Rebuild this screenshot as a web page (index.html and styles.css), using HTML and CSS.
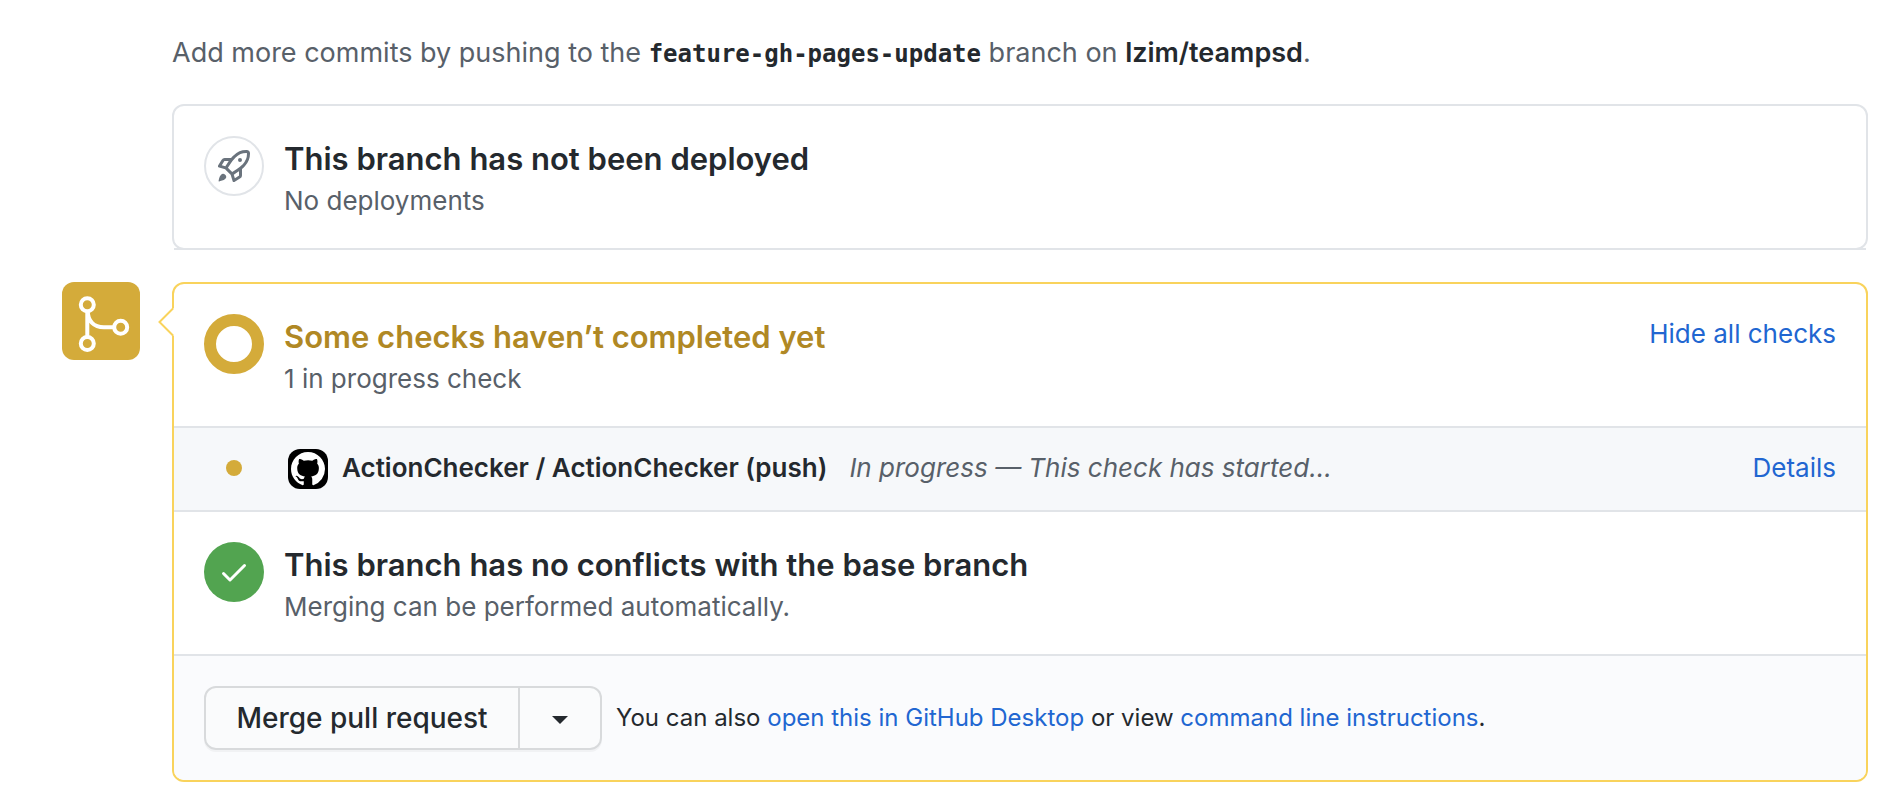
FILE: index.html
```html
<!DOCTYPE html>
<html lang="en">
<head>
<meta charset="utf-8">
<title>Merge pull request</title>
<link rel="stylesheet" href="styles.css">
</head>
<body>
<main class="page">
  <p class="push-hint">Add more commits by pushing to the <strong class="branch-name">feature-gh-pages-update</strong> branch on <strong class="repo-name">lzim/teampsd</strong>.</p>

  <section class="box deploy-box">
    <div class="item deploy-item">
      <span class="status status-deploy">
        <svg class="glyph" viewBox="0 0 16 16" aria-hidden="true"><path fill-rule="evenodd" d="M14.064 0a8.75 8.75 0 00-6.187 2.563l-.459.458c-.314.314-.616.641-.904.979H3.31a1.75 1.75 0 00-1.49.833L.11 7.607a.75.75 0 00.418 1.11l3.102.954c.037.051.079.1.124.145l2.429 2.428c.046.046.094.088.145.125l.954 3.102a.75.75 0 001.11.418l2.774-1.707a1.75 1.75 0 00.833-1.49V9.485c.338-.288.665-.59.979-.904l.458-.459A8.75 8.75 0 0016 1.936V1.75A1.75 1.75 0 0014.25 0h-.186zM10.5 10.625c-.088.06-.177.118-.266.175l-2.35 1.521.548 1.783 1.949-1.2a.25.25 0 00.119-.213v-2.066zM3.678 8.116L5.2 5.766c.058-.09.117-.178.176-.266H3.309a.25.25 0 00-.213.119l-1.2 1.95 1.782.547zm5.26-4.493A7.25 7.25 0 0114.063 1.5h.186a.25.25 0 01.25.25v.186a7.25 7.25 0 01-2.123 5.127l-.459.458a15.21 15.21 0 01-2.499 2.02l-2.317 1.5-2.143-2.143 1.5-2.317a15.25 15.25 0 012.02-2.5l.458-.458h.002zM12 5a1 1 0 11-2 0 1 1 0 012 0zm-8.44 9.56a1.5 1.5 0 10-2.12-2.12c-.734.73-1.047 2.332-1.15 3.003a.23.23 0 00.265.265c.671-.103 2.273-.416 3.005-1.148z"/></svg>
      </span>
      <div class="item-text">
        <h2 class="item-title">This branch has not been deployed</h2>
        <p class="item-note">No deployments</p>
      </div>
    </div>
  </section>

  <div class="merge-row">
    <span class="merge-badge">
      <svg class="merge-glyph" viewBox="0 0 56 62" aria-hidden="true"><g fill="none" stroke="#fff" stroke-width="4"><circle cx="13.3" cy="13.7" r="6.5"/><circle cx="13.3" cy="52.5" r="6.5"/><circle cx="46.7" cy="36.3" r="6.5"/><path d="M13.3 20v26M13.8 20c0 10 6 16.300 16 16.300h10.500"/></g></svg>
    </span>
    <section class="box merge-box">
      <svg class="pointer" viewBox="0 0 16 30" aria-hidden="true"><path class="pointer-fill" d="M16 1L2 15l14 14z"/><path class="pointer-line" d="M15 1.500L1.500 15 15 28.500"/></svg>
      <div class="item">
        <span class="status status-pending"></span>
        <div class="item-text">
          <h2 class="item-title pending">Some checks haven’t completed yet</h2>
          <p class="item-note">1 in progress check</p>
        </div>
        <a class="link" href="#checks">Hide all checks</a>
      </div>
      <div class="check" id="checks">
        <span class="dot"></span>
        <span class="avatar">
          <svg class="avatar-glyph" viewBox="0 0 16 16" aria-hidden="true"><path d="M8 0C3.580 0 0 3.580 0 8c0 3.540 2.290 6.530 5.470 7.590.4.070.55-.17.55-.38 0-.19-.01-.82-.01-1.490-2.010.37-2.530-.49-2.690-.94-.09-.23-.48-.94-.82-1.130-.28-.15-.68-.52-.01-.53.63-.01 1.080.58 1.230.82.72 1.210 1.870.87 2.330.66.07-.52.28-.87.51-1.070-1.780-.2-3.640-.89-3.640-3.950 0-.87.31-1.590.82-2.150-.08-.2-.36-1.020.08-2.120 0 0 .67-.21 2.200.82.64-.18 1.320-.27 2-.27s1.360.09 2 .27c1.530-1.040 2.200-.82 2.200-.82.44 1.100.16 1.920.08 2.120.51.56.82 1.270.82 2.150 0 3.070-1.870 3.750-3.650 3.950.29.25.54.73.54 1.480 0 1.070-.01 1.930-.01 2.200 0 .21.15.46.55.38A8.013 8.013 0 0016 8c0-4.420-3.580-8-8-8z"/></svg>
        </span>
        <strong class="check-name">ActionChecker / ActionChecker (push)</strong>
        <em class="check-state">In progress — This check has started...</em>
        <a class="link check-link" href="#details">Details</a>
      </div>
      <div class="item">
        <span class="status status-ok">
          <svg class="glyph" viewBox="0 0 16 16" aria-hidden="true"><path d="M13.780 4.220a.75.75 0 010 1.060l-7.250 7.250a.75.75 0 01-1.060 0L2.220 9.280a.75.75 0 011.060-1.060L6 10.940l6.720-6.720a.75.75 0 011.060 0z"/></svg>
        </span>
        <div class="item-text">
          <h2 class="item-title">This branch has no conflicts with the base branch</h2>
          <p class="item-note">Merging can be performed automatically.</p>
        </div>
      </div>
      <div class="actions">
        <div class="button-group">
          <button class="btn btn-main" type="button">Merge pull request</button>
          <button class="btn btn-caret" type="button" aria-label="Select merge method"><span class="caret"></span></button>
        </div>
        <p class="alt">You can also <a class="alt-link" href="#desktop">open this in GitHub Desktop</a> or view <a class="alt-link" href="#cli">command line instructions</a>.</p>
      </div>
    </section>
  </div>
</main>
</body>
</html>
```
FILE: styles.css
```css
* { box-sizing: border-box; }

body {
  margin: 0;
  background: #fff;
  color: #24292e;
  font-family: Inter, "Liberation Sans", sans-serif;
  font-size: 26px;
  line-height: 40px;
}

h2, p { margin: 0; }
a { color: #2166d1; text-decoration: none; }

.page { padding: 33px 36px 14px 62px; }

.push-hint {
  margin: 0 0 30px 110px;
  font-size: 27px;
  color: #586069;
}
.branch-name {
  font-family: "DejaVu Sans Mono", monospace;
  font-size: 24px;
  color: #24292e;
}
.repo-name { font-weight: 600; color: #24292e; }

.box { border: 2px solid #e1e4e8; border-radius: 12px; }
.deploy-box { margin: 0 0 32px 110px; }
.deploy-item { margin-bottom: -2px; }

.item {
  display: flex;
  gap: 20px;
  padding: 30px;
  border-bottom: 2px solid #e1e4e8;
}
.item-text { flex: 1; height: 82px; padding-top: 2px; }
.item-title { font-size: 31px; font-weight: 600; line-height: 42px; }
.item-note { color: #586069; line-height: 42px; }
.pending { color: #b08824; }

.status {
  display: flex;
  flex: none;
  align-items: center;
  justify-content: center;
  width: 60px;
  height: 60px;
  border-radius: 50%;
}
.status-deploy { border: 2px solid #e1e4e8; fill: #6a737d; }
.status-pending { border: 12px solid #d4ab3a; }
.status-ok { background: #52a450; fill: #fff; }
.glyph { width: 32px; height: 32px; }

.merge-row { display: flex; gap: 32px; }
.merge-badge {
  flex: none;
  width: 78px;
  height: 78px;
  padding: 9px 12px;
  border-radius: 12px;
  background: #d4ab3a;
}
.merge-glyph { display: block; width: 56px; height: 62px; }
.merge-box { position: relative; flex: 1; border-color: #f9d35c; }

.pointer {
  position: absolute;
  top: 23px;
  left: -16px;
  width: 16px;
  height: 30px;
}
.pointer-fill { fill: #fff; }
.pointer-line { fill: none; stroke: #f9d35c; stroke-width: 2; }

.check {
  display: flex;
  align-items: center;
  height: 84px;
  padding: 0 30px 2px 52px;
  border-bottom: 2px solid #e1e4e8;
  background: #f6f8fa;
}
.dot { width: 16px; height: 16px; border-radius: 50%; background: #d4ab3a; }
.avatar {
  display: flex;
  align-items: center;
  justify-content: center;
  width: 40px;
  height: 40px;
  margin: 2px 14px 0 46px;
  border-radius: 12px;
  background: #000;
}
.avatar-glyph { width: 34px; height: 34px; fill: #fff; }
.check-name { font-weight: 600; }
.check-state { margin-left: 22px; color: #586069; }
.check-link { margin-left: auto; }

.actions {
  display: flex;
  align-items: center;
  gap: 14px;
  padding: 30px;
  border-radius: 0 0 10px 10px;
  background: #fafbfd;
}
.button-group {
  display: flex;
  border-radius: 12px;
  box-shadow: 0 2px 0 rgba(27, 31, 35, 0.04);
}
.btn {
  height: 64px;
  border: 2px solid #d8dadc;
  background: #fafbfc;
  color: #24292e;
  font: 500 28px/40px Inter, "Liberation Sans", sans-serif;
}
.btn-main { width: 316px; padding: 0; border-radius: 12px 0 0 12px; }
.btn-caret {
  display: flex;
  align-items: center;
  justify-content: center;
  width: 82px;
  border-left: 0;
  border-radius: 0 12px 12px 0;
}
.caret {
  margin-top: 4px;
  border: 8px solid transparent;
  border-top-color: #24292e;
  border-bottom: 0;
}
.alt { font-size: 24px; }
```
